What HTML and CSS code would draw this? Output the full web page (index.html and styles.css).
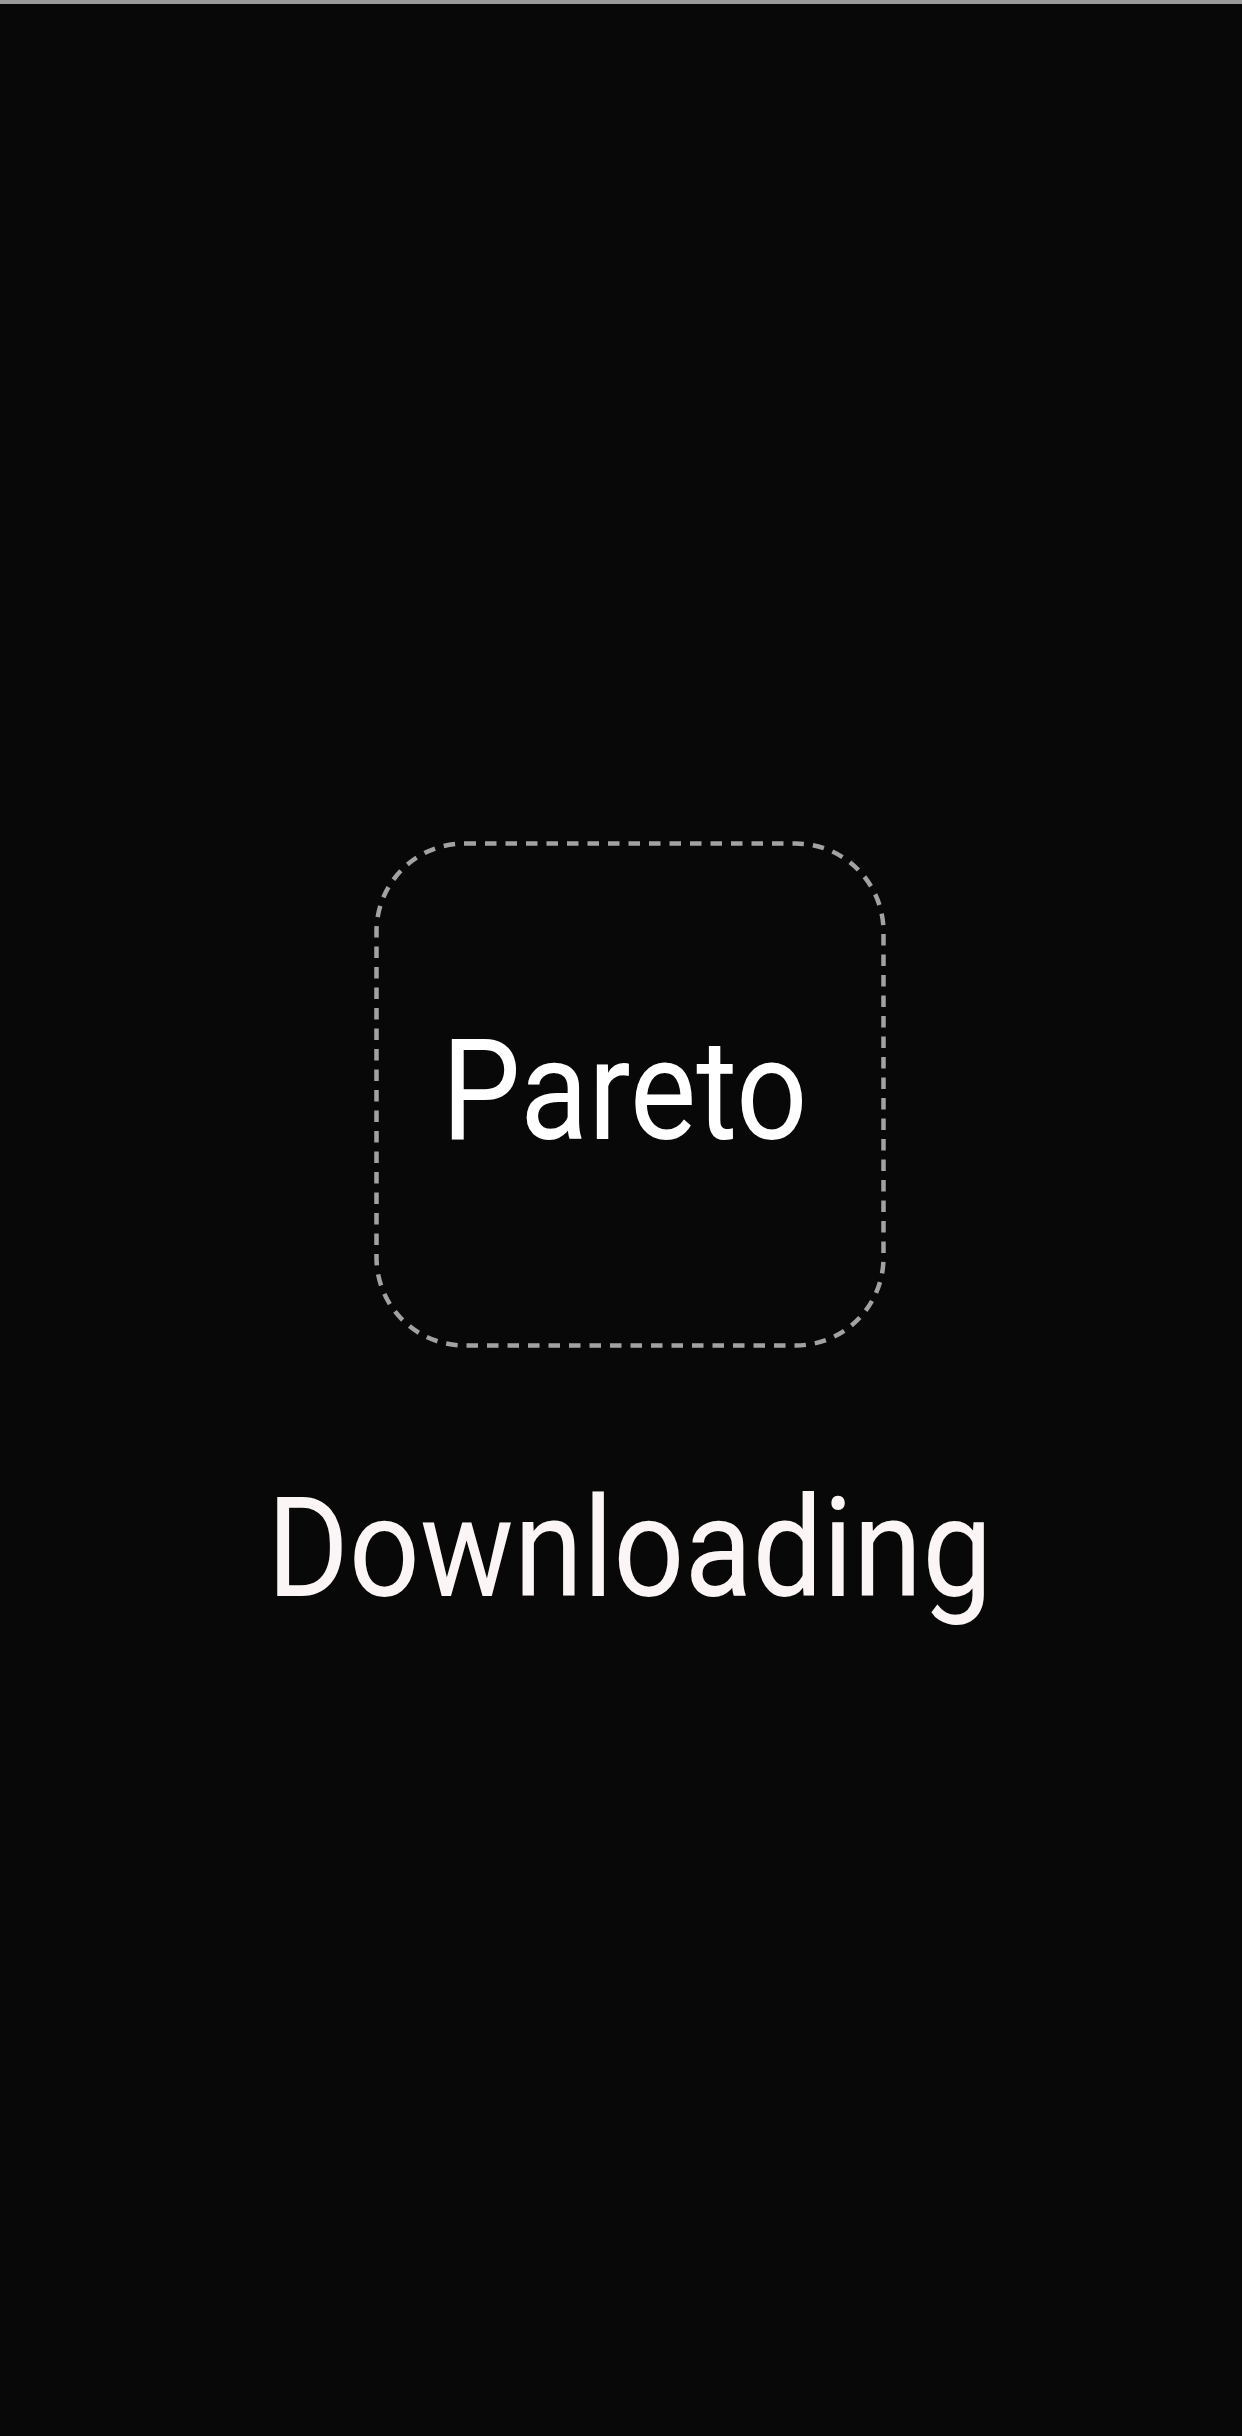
FILE: index.html
```html
<!DOCTYPE html>
<html lang="en">
<head>
<meta charset="utf-8">
<title>Pareto</title>
<link rel="stylesheet" href="styles.css">
</head>
<body>
<div class="screen">
  <div class="icon">
    <svg class="icon-frame" width="512" height="507" viewBox="0 0 512 507" aria-hidden="true">
      <rect x="2.5" y="2.5" width="507" height="502" rx="88" ry="88" fill="none" stroke="#a2a2a2" stroke-width="4.5" stroke-dasharray="11.5 9"/>
    </svg>
    <span class="icon-label">Pareto</span>
  </div>
  <div class="status"><span class="status-text">Downloading</span></div>
</div>
</body>
</html>
```
FILE: styles.css
```css
html, body {
  margin: 0;
  padding: 0;
  background: #080808;
}
.screen {
  box-sizing: border-box;
  width: 1242px;
  height: 2436px;
  border-top: 4px solid #9a9a9a;
  padding-left: 18px;
  display: flex;
  flex-direction: column;
  align-items: center;
  font-family: Roboto, "Liberation Sans", sans-serif;
}
.icon {
  position: relative;
  width: 512px;
  height: 507px;
  margin-top: 837px;
  display: flex;
  align-items: center;
  justify-content: center;
  box-sizing: border-box;
  padding-bottom: 9px;
  padding-right: 10px;
}
.icon-frame {
  position: absolute;
  left: 0;
  top: 0;
}
.icon-label {
  display: inline-block;
  font-size: 141px;
  line-height: 1;
  color: #ffffff;
  transform: scaleX(0.89);
}
.status {
  margin-top: 130px;
  display: flex;
  justify-content: center;
}
.status-text {
  display: inline-block;
  font-size: 140px;
  line-height: 1;
  color: #fcf5f5;
  transform: scaleX(0.892);
}
```
